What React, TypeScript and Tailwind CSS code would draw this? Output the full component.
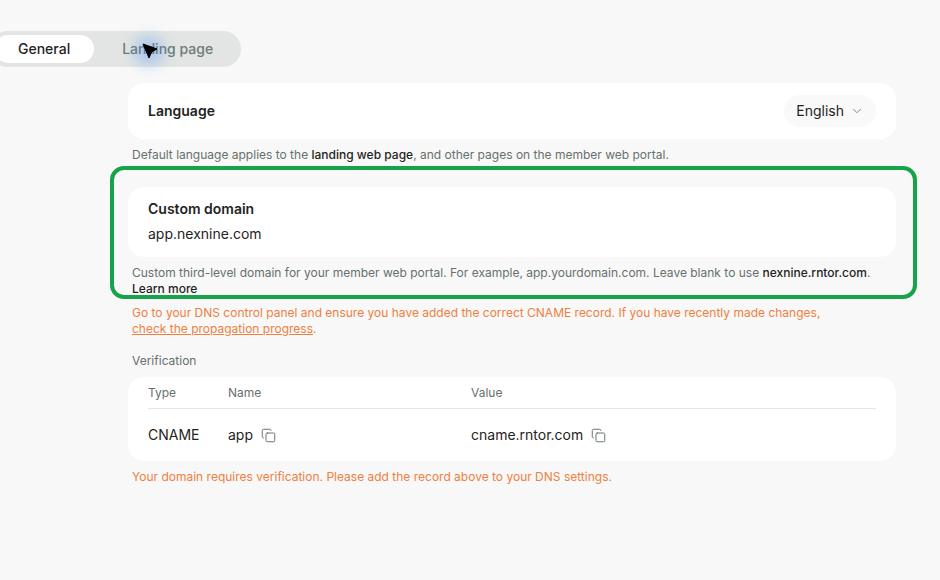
import React from 'react';
import { ChevronDown, Copy } from 'lucide-react';

const CopyIcon = () => <Copy className="w-[15px] h-[15px] text-[#5f6b66]" strokeWidth={1.5} />;

const App: React.FC = () => {
  return (
    <div className="relative w-[940px] h-[580px] overflow-hidden bg-[#f8f8f8] font-['Inter',sans-serif] text-[#1f2422]">
      <div className="pt-[31px] -ml-[10px] w-fit">
        <div className="flex gap-1 p-1 rounded-full bg-[#e2e5e3] text-sm leading-7">
          <div className="px-6 rounded-full bg-white font-medium">General</div>
          <div className="px-6 rounded-full text-[#6f7b76] font-medium">Landing page</div>
        </div>
      </div>

      <div className="w-[768px] ml-[128px] mt-4">
        <div className="flex items-center justify-between h-14 pl-5 pr-5 rounded-2xl bg-white">
          <div className="text-sm font-semibold">Language</div>
          <div className="flex items-center gap-[6px] h-8 px-3 rounded-full bg-[#f8f9f8] text-sm">
            English
            <ChevronDown className="w-[14px] h-[14px] text-[#6f7b76]" strokeWidth={1.5} />
          </div>
        </div>
        <p className="px-1 mt-2 text-xs leading-4 text-[#66716d]">
          Default language applies to the <span className="font-medium text-[#1f2422]">landing web page</span>, and other pages on the member web portal.
        </p>

        <div className="mt-6 h-[70px] px-5 pt-[13px] rounded-2xl bg-white">
          <div className="text-sm leading-[18px] font-semibold">Custom domain</div>
          <div className="mt-[6px] text-sm leading-5">app.nexnine.com</div>
        </div>
        <p className="px-1 mt-2 text-xs leading-4 text-[#66716d]">
          Custom third-level domain for your member web portal. For example, app.yourdomain.com. Leave blank to use <span className="font-medium text-[#1f2422]">nexnine.rntor.com</span>.{' '}
          <span className="font-medium text-[#1f2422]">Learn more</span>
        </p>
        <p className="px-1 mt-2 text-xs leading-4 text-[#ee8040]">
          Go to your DNS control panel and ensure you have added the correct CNAME record. If you have recently made changes,
          <br />
          <span className="underline">check the propagation progress</span>.
        </p>

        <div className="px-1 mt-4 text-xs leading-4 text-[#66716d]">Verification</div>
        <div className="mt-2 h-[84px] px-5 rounded-2xl bg-white">
          <div className="grid grid-cols-[80px_243px_1fr] h-8 items-center border-b border-[#e5e7e6] text-xs text-[#66716d]">
            <div>Type</div>
            <div>Name</div>
            <div>Value</div>
          </div>
          <div className="grid grid-cols-[80px_243px_1fr] h-[52px] items-center text-sm">
            <div>CNAME</div>
            <div className="flex items-center gap-2">app <CopyIcon /></div>
            <div className="flex items-center gap-2">cname.rntor.com <CopyIcon /></div>
          </div>
        </div>
        <p className="px-1 mt-2 text-xs leading-4 text-[#ee8040]">
          Your domain requires verification. Please add the record above to your DNS settings.
        </p>
      </div>

      {/* annotation over the custom domain block */}
      <div className="absolute left-[110px] top-[166px] w-[807px] h-[133px] rounded-[14px] border-4 border-[#16a34a]" />

      {/* cursor */}
      <div className="absolute left-[134px] top-[36px] w-[30px] h-[30px] rounded-full bg-[#3b82f6]/30 blur-[7px]" />
      <svg className="absolute left-[141px] top-[42px]" width="18" height="18" viewBox="0 0 18 18">
        <path d="M2 2 L16 7 L10.5 10 L8 16 Z" fill="#000" stroke="#000" strokeWidth="1" strokeLinejoin="round" />
      </svg>
    </div>
  );
};

export default App;
